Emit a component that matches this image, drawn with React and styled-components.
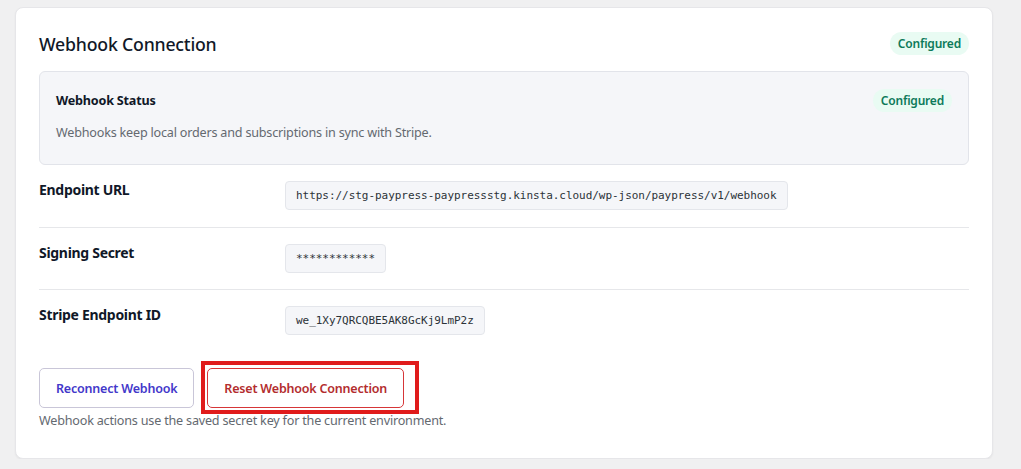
import React from 'react';
import styled, { createGlobalStyle } from 'styled-components';

const rows = [
  { label: 'Endpoint URL', value: 'https://stg-paypress-paypressstg.kinsta.cloud/wp-json/paypress/v1/webhook' },
  { label: 'Signing Secret', value: '************' },
  { label: 'Stripe Endpoint ID', value: 'we_1Xy7QRCQBE5AK8GcKj9LmP2z' },
];

const App = () => (
  <>
    <GlobalStyle />
    <Card>
      <Header>
        <Title>Webhook Connection</Title>
        <Badge>Configured</Badge>
      </Header>

      <StatusBox>
        <StatusHead>
          <StatusTitle>Webhook Status</StatusTitle>
          <Badge>Configured</Badge>
        </StatusHead>
        <Muted>Webhooks keep local orders and subscriptions in sync with Stripe.</Muted>
      </StatusBox>

      <Table>
        {rows.map(row => (
          <Row key={row.label}>
            <Label>{row.label}</Label>
            <div><Code>{row.value}</Code></div>
          </Row>
        ))}
      </Table>

      <Actions>
        <Button>Reconnect Webhook</Button>
        <Marked>
          <Button $danger>Reset Webhook Connection</Button>
          <MarkFrame />
        </Marked>
      </Actions>
      <Note>Webhook actions use the saved secret key for the current environment.</Note>
    </Card>
  </>
);

export default App;

const GlobalStyle = createGlobalStyle`
  body {
    margin: 0;
    background: #f0f0f1;
    font-family: "Noto Sans", "Open Sans", sans-serif;
    color: #1d2327;
  }
`;

const Card = styled.div`
  box-sizing: border-box;
  width: 978px;
  margin: 7px 0 0 15px;
  padding: 24px 23px 28px;
  background: #fff;
  border: 1px solid #e6e6e9;
  border-radius: 8px;
  box-shadow: 0 1px 2px rgba(0, 0, 0, 0.05);
`;

const Header = styled.div`
  display: flex;
  align-items: center;
  justify-content: space-between;
  height: 23px;
  margin-bottom: 16px;
`;

const Title = styled.h2`
  margin: 0;
  font-size: 17.7px;
  font-weight: 500;
  color: #101828;
  letter-spacing: -0.2px;
`;

const Badge = styled.span`
  display: inline-flex;
  align-items: center;
  height: 23px;
  padding: 0 8px;
  border-radius: 999px;
  background: #e9fbf3;
  color: #0d7a5a;
  font-size: 12px;
  font-weight: 600;
  letter-spacing: -0.2px;
`;

const StatusBox = styled.div`
  padding: 16px 16px 21px;
  background: #f5f6f9;
  border: 1px solid #e2e4ea;
  border-radius: 6px;
`;

const StatusHead = styled.div`
  display: flex;
  align-items: center;
  justify-content: space-between;
  height: 24px;
`;

const StatusTitle = styled.h3`
  margin: 0;
  font-size: 12.6px;
  font-weight: 700;
  color: #101828;
  letter-spacing: -0.2px;
`;

const Muted = styled.p`
  margin: 11px 0 0;
  font-size: 12.6px;
  line-height: 20px;
  color: #646970;
  letter-spacing: -0.2px;
`;

const Table = styled.div`
  display: flex;
  flex-direction: column;
`;

const Row = styled.div`
  display: grid;
  grid-template-columns: 246px 1fr;
  padding: 16px 0 17px;
  border-bottom: 1px solid #e6e7ea;

  &:nth-child(2) {
    padding-bottom: 16px;
  }

  &:last-child {
    border-bottom: none;
  }
`;

const Label = styled.div`
  font-size: 14px;
  line-height: 18px;
  font-weight: 700;
  color: #101828;
  letter-spacing: -0.3px;
`;

const Code = styled.code`
  display: inline-flex;
  align-items: center;
  box-sizing: border-box;
  height: 29px;
  padding: 0 10px;
  background: #f5f6f9;
  border: 1px solid #e4e6eb;
  border-radius: 4px;
  font-family: "DejaVu Sans Mono", "Liberation Mono", monospace;
  font-size: 11px;
  letter-spacing: -0.04px;
  color: #2c3338;
`;

const Actions = styled.div`
  display: flex;
  gap: 13px;
  margin-top: 16px;
`;

const Button = styled.button`
  box-sizing: border-box;
  height: 40px;
  padding: 0 16px;
  background: #fff;
  border: 1px solid ${p => (p.$danger ? '#d63638' : '#c9c6d8')};
  border-radius: 5px;
  color: ${p => (p.$danger ? '#b32d2e' : '#4338ca')};
  font-family: inherit;
  font-size: 12.5px;
  font-weight: 600;
  letter-spacing: -0.2px;
  cursor: pointer;
`;

const Marked = styled.div`
  position: relative;
  display: flex;
`;

// red frame drawn around the reset button
const MarkFrame = styled.span`
  position: absolute;
  top: -7px;
  left: -6px;
  right: -15px;
  bottom: -6px;
  border: 4px solid #e01b1b;
  pointer-events: none;
`;

const Note = styled.p`
  margin: 4px 0 0;
  font-size: 12.6px;
  line-height: 18px;
  color: #646970;
  letter-spacing: -0.2px;
`;
